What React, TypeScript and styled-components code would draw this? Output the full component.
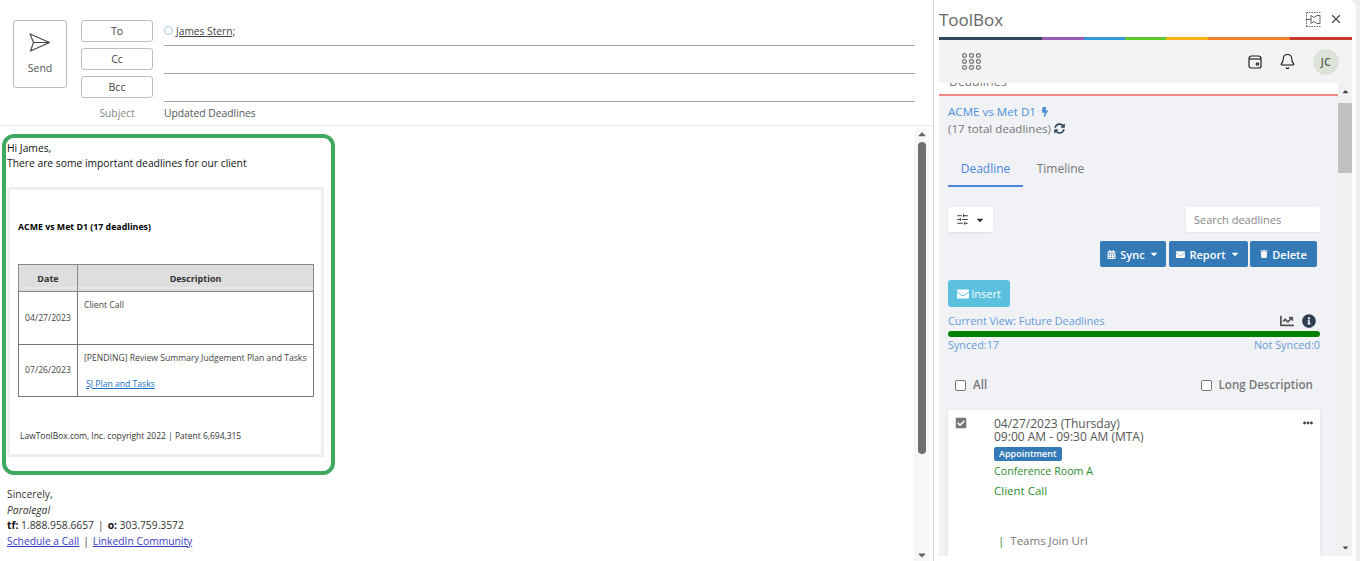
import styled, { createGlobalStyle } from 'styled-components';
import { Bell, SlidersHorizontal, X } from 'lucide-react';
import {
  FaBolt,
  FaCalendarAlt,
  FaCaretDown,
  FaCaretUp,
  FaChartLine,
  FaCheckSquare,
  FaEllipsisH,
  FaEnvelope,
  FaInfoCircle,
  FaSyncAlt,
  FaTrash,
} from 'react-icons/fa';

const GlobalStyle = createGlobalStyle`
  html, body {
    margin: 0;
    height: 561px;
    overflow: hidden;
    background: #fff;
  }
  * { box-sizing: border-box; }
`;

const segoe = `'Open Sans', 'Noto Sans', sans-serif`;

const rainbow = [
  { width: 103, color: '#34495e' },
  { width: 42, color: '#9b59b6' },
  { width: 41, color: '#3498db' },
  { width: 41, color: '#5ec72f' },
  { width: 42, color: '#f5b70f' },
  { width: 82, color: '#ee7f24' },
  { width: 62, color: '#c8392b' },
];

const App = () => {
  return (
    <Page>
      <GlobalStyle />
      <Compose>
        <Header>
          <SendButton>
            <svg width="22" height="20" viewBox="0 0 22 20" fill="none" stroke="#444" strokeWidth="1.1" strokeLinejoin="round">
              <path d="M1 1 L20.5 9.5 L1.5 18 L4.5 9.5 Z M4.5 9.5 H20.5" />
            </svg>
            <span>Send</span>
          </SendButton>
          <Recipients>
            <RecipientRow>
              <RecipientButton>To</RecipientButton>
              <RecipientLine>
                <Presence />
                <RecipientName>James Stern;</RecipientName>
              </RecipientLine>
            </RecipientRow>
            <RecipientRow>
              <RecipientButton>Cc</RecipientButton>
              <RecipientLine />
            </RecipientRow>
            <RecipientRow>
              <RecipientButton>Bcc</RecipientButton>
              <RecipientLine />
            </RecipientRow>
            <SubjectRow>
              <SubjectLabel>Subject</SubjectLabel>
              <SubjectText>Updated Deadlines</SubjectText>
            </SubjectRow>
          </Recipients>
        </Header>
        <BodyArea>
          <MailBody>
            <Highlight>
              <Greeting>
                Hi James,
                <br />
                There are some important deadlines for our client
              </Greeting>
              <ReportCard>
                <ReportTitle>ACME vs Met D1 (17 deadlines)</ReportTitle>
                <ReportTable>
                  <thead>
                    <tr>
                      <HeadCell $width={59}>Date</HeadCell>
                      <HeadCell>Description</HeadCell>
                    </tr>
                  </thead>
                  <tbody>
                    <tr>
                      <DateCell $height={53}>04/27/2023</DateCell>
                      <DescCell>Client Call</DescCell>
                    </tr>
                    <tr>
                      <DateCell $height={52}>07/26/2023</DateCell>
                      <DescCell>
                        [PENDING] Review Summary Judgement Plan and Tasks
                        <TaskLink>SJ Plan and Tasks</TaskLink>
                      </DescCell>
                    </tr>
                  </tbody>
                </ReportTable>
                <ReportFooter>LawToolBox.com, Inc. copyright 2022 | Patent 6,694,315</ReportFooter>
              </ReportCard>
            </Highlight>
            <Signature>
              Sincerely,
              <br />
              <em>Paralegal</em>
              <br />
              <b>tf:</b> 1.888.958.6657<Separator>|</Separator><b>o:</b> 303.759.3572
              <br />
              <SignatureLink>Schedule a Call</SignatureLink>
              <Separator>|</Separator>
              <SignatureLink>LinkedIn Community</SignatureLink>
            </Signature>
          </MailBody>
          <MailScrollbar>
            <FaCaretUp size={12} color="#666" />
            <MailThumb />
            <FaCaretDown size={12} color="#666" />
          </MailScrollbar>
        </BodyArea>
      </Compose>

      <Sidebar>
        <TitleBar>
          <Title>ToolBox</Title>
          <TitleIcons>
            <svg width="15" height="15" viewBox="0 0 15 15" fill="none" stroke="#666" strokeWidth="1">
              <path d="M0.5 0.5H14.5M0.5 14.5H14.5M0.5 0.5V14.5" strokeDasharray="1.5 1" />
              <path d="M0 7.5H5M5 3.5L8 5.5L11 3.5H14V11.5H11L8 9.5L5 11.5Z" />
            </svg>
            <X size={14} color="#444" />
          </TitleIcons>
        </TitleBar>
        <RainbowBar>
          {rainbow.map((part) => (
            <RainbowPart key={part.color} $width={part.width} $color={part.color} />
          ))}
        </RainbowBar>
        <TopBar>
          <svg width="19" height="17" viewBox="0 0 19 17" fill="none" stroke="#777" strokeWidth="1.2">
            {[2.5, 8.5, 14.5].map((cy) =>
              [2.5, 9.5, 16.5].map((cx) => <ellipse key={`${cx}-${cy}`} cx={cx} cy={cy} rx="2" ry="1.8" />)
            )}
          </svg>
          <TopBarRight>
            <svg width="14" height="14" viewBox="0 0 14 14" fill="none" stroke="#222" strokeWidth="1.2">
              <path d="M1 3.5a2.5 2.5 0 0 1 2.5-2.5h7A2.5 2.5 0 0 1 13 3.5V11a2 2 0 0 1-2 2H3a2 2 0 0 1-2-2z" />
              <path d="M1 4h12" />
              <circle cx="9.5" cy="9" r="1.2" />
            </svg>
            <Bell size={17} color="#111" strokeWidth={1.5} />
            <Avatar>JC</Avatar>
          </TopBarRight>
        </TopBar>
        <Panel>
          <PanelContent>
            <SectionHead>
              <SectionHeadText>Deadlines</SectionHeadText>
            </SectionHead>
            <Matter>
              <MatterName>
                ACME vs Met D1 <FaBolt size={10} />
              </MatterName>
              <MatterCount>
                (17 total deadlines) <FaSyncAlt size={11} color="#34495e" />
              </MatterCount>
            </Matter>
            <Tabs>
              <Tab $active>Deadline</Tab>
              <Tab>Timeline</Tab>
            </Tabs>
            <FilterRow>
              <FilterButton>
                <SlidersHorizontal size={13} color="#333" strokeWidth={1.7} />
                <FaCaretDown size={10} color="#333" />
              </FilterButton>
              <SearchBox>Search deadlines</SearchBox>
            </FilterRow>
            <ActionRow>
              <ActionButton $width={66}>
                <FaCalendarAlt size={9} /> Sync <FaCaretDown size={10} />
              </ActionButton>
              <ActionButton $width={79}>
                <FaEnvelope size={9} /> Report <FaCaretDown size={10} />
              </ActionButton>
              <ActionButton $width={67}>
                <FaTrash size={8} /> Delete
              </ActionButton>
            </ActionRow>
            <InsertButton>
              <FaEnvelope size={12} /> Insert
            </InsertButton>
            <ViewRow>
              <span>Current View: Future Deadlines</span>
              <ViewIcons>
                <FaChartLine size={14} color="#555" />
                <FaInfoCircle size={14} color="#2c3e50" />
              </ViewIcons>
            </ViewRow>
            <SyncBar />
            <SyncRow>
              <span>Synced:17</span>
              <span>Not Synced:0</span>
            </SyncRow>
            <CheckRow>
              <CheckLabel>
                <CheckBox /> All
              </CheckLabel>
              <CheckLabel>
                <CheckBox /> Long Description
              </CheckLabel>
            </CheckRow>
            <DeadlineCard>
              <FaCheckSquare size={12} color="#777" />
              <DeadlineInfo>
                <DeadlineDate>
                  04/27/2023 (Thursday)
                  <br />
                  09:00 AM - 09:30 AM (MTA)
                </DeadlineDate>
                <Badge>Appointment</Badge>
                <Location>Conference Room A</Location>
                <DeadlineTitle>Client Call</DeadlineTitle>
                <JoinRow>
                  <JoinBar>|</JoinBar> Teams Join Url
                </JoinRow>
              </DeadlineInfo>
              <CardMenu>
                <FaEllipsisH size={10} color="#444" />
              </CardMenu>
            </DeadlineCard>
          </PanelContent>
          <PanelScrollbar>
            <FaCaretUp size={9} color="#444" />
            <PanelThumb />
            <FaCaretDown size={9} color="#444" />
          </PanelScrollbar>
        </Panel>
      </Sidebar>
    </Page>
  );
};

export default App;

const Page = styled.div`
  display: flex;
  width: 1360px;
  height: 561px;
  overflow: hidden;
  background: #ebedf1;
  font-family: ${segoe};
`;

const Compose = styled.div`
  width: 933px;
  height: 561px;
  background: #fff;
  display: flex;
  flex-direction: column;
`;

const Header = styled.div`
  height: 126px;
  display: flex;
  padding: 20px 18px 0 13px;
  gap: 14px;
  border-bottom: 1px solid #e6e6e6;
`;

const SendButton = styled.div`
  width: 54px;
  height: 68px;
  border: 1px solid #bdbdbd;
  border-radius: 3px;
  display: flex;
  flex-direction: column;
  align-items: center;
  padding-top: 12px;
  gap: 8px;
  font-size: 10.5px;
  color: #555;
`;

const Recipients = styled.div`
  flex: 1;
  display: flex;
  flex-direction: column;
  gap: 6px;
`;

const RecipientRow = styled.div`
  display: flex;
  height: 22px;
  gap: 11px;
`;

const RecipientButton = styled.div`
  width: 72px;
  height: 22px;
  border: 1px solid #bdbdbd;
  border-radius: 3px;
  display: flex;
  align-items: center;
  justify-content: center;
  font-size: 10.5px;
  color: #444;
`;

const RecipientLine = styled.div`
  flex: 1;
  height: 26px;
  border-bottom: 1px solid #a6a6a6;
  display: flex;
  align-items: center;
  padding-bottom: 4px;
  gap: 3px;
`;

const Presence = styled.span`
  width: 9px;
  height: 9px;
  border-radius: 50%;
  border: 1px solid #a5cfe0;
`;

const RecipientName = styled.span`
  font-size: 10.2px;
  color: #444;
  text-decoration: underline;
`;

const SubjectRow = styled.div`
  display: flex;
  gap: 11px;
  margin-top: 2px;
  font-size: 10.3px;
  line-height: 15px;
`;

const SubjectLabel = styled.span`
  width: 72px;
  text-align: center;
  color: #888;
`;

const SubjectText = styled.span`
  color: #555;
`;

const BodyArea = styled.div`
  flex: 1;
  display: flex;
  min-height: 0;
`;

const MailBody = styled.div`
  flex: 1;
  padding: 8px 0 0 2px;
`;

const Highlight = styled.div`
  width: 333px;
  height: 341px;
  border: 4px solid #3fa95f;
  border-radius: 12px;
  padding: 3px 0 0 1px;
`;

const Greeting = styled.div`
  font-size: 10.3px;
  line-height: 15px;
  color: #111;
`;

const ReportCard = styled.div`
  margin-top: 16px;
  width: 317px;
  height: 270px;
  border: 3px solid #efefef;
  padding: 30px 8px 0 8px;
`;

const ReportTitle = styled.div`
  font-size: 8.8px;
  font-weight: 700;
  line-height: 14px;
  color: #000;
`;

const ReportTable = styled.table`
  margin-top: 30px;
  width: 296px;
  border-collapse: collapse;
  table-layout: fixed;
  font-size: 8.65px;
  line-height: 11px;
  color: #444;
`;

const HeadCell = styled.th<{ $width?: number }>`
  width: ${(props) => (props.$width ? `${props.$width}px` : 'auto')};
  height: 27px;
  padding: 0;
  background: linear-gradient(#dedede 0 84%, #eee 84% 90%, #dedede 90%);
  border: 1px solid #888;
  font-size: 9px;
  font-weight: 700;
  color: #333;
`;

const DateCell = styled.td<{ $height: number }>`
  height: ${(props) => props.$height}px;
  border: 1px solid #777;
  text-align: center;
  padding: 0;
`;

const DescCell = styled.td`
  border: 1px solid #777;
  border-left-color: #aaa;
  vertical-align: top;
  padding: 8px 6px 0;
  white-space: nowrap;
`;

const TaskLink = styled.a`
  display: block;
  margin: 15px 0 0 2px;
  color: #1a6fc4;
  text-decoration: underline;
`;

const ReportFooter = styled.div`
  margin: 33px 0 0 2px;
  font-size: 8.47px;
  line-height: 12px;
  color: #333;
`;

const Signature = styled.div`
  margin: 12px 0 0 5px;
  font-size: 10.3px;
  line-height: 15.5px;
  color: #333;

  b {
    color: #111;
  }
`;

const Separator = styled.span`
  margin: 0 4px;
  color: #444;
`;

const SignatureLink = styled.a`
  color: #3a3ac4;
  text-decoration: underline;
`;

const MailScrollbar = styled.div`
  width: 15px;
  margin: 2px 4px 0 0;
  display: flex;
  flex-direction: column;
  align-items: center;
  background: #f7f7f7;
  border-radius: 5px 5px 0 0;
`;

const MailThumb = styled.div`
  width: 8px;
  height: 312px;
  margin: 2px 0 auto;
  border-radius: 4px;
  background: #6f6f6f;
`;

const Sidebar = styled.div`
  width: 423px;
  height: 561px;
  background: #fff;
  border-left: 1px solid #d8d8d8;
  border-top-right-radius: 8px;
  padding: 0 4px 5px 5px;
  display: flex;
  flex-direction: column;
`;

const TitleBar = styled.div`
  height: 37px;
  display: flex;
  align-items: center;
  justify-content: space-between;
  padding: 2px 9px 0 0;
`;

const Title = styled.div`
  font-size: 17px;
  color: #666;
`;

const TitleIcons = styled.div`
  display: flex;
  align-items: center;
  gap: 8px;
  margin-top: -1px;
`;

const RainbowBar = styled.div`
  height: 3px;
  display: flex;
`;

const RainbowPart = styled.div<{ $width: number; $color: string }>`
  width: ${(props) => props.$width}px;
  background: ${(props) => props.$color};
`;

const TopBar = styled.div`
  height: 43px;
  background: #f3f3f4;
  display: flex;
  align-items: center;
  justify-content: space-between;
  padding: 0 13px 0 23px;
`;

const TopBarRight = styled.div`
  display: flex;
  align-items: center;
  gap: 17px;
`;

const Avatar = styled.div`
  width: 26px;
  height: 26px;
  border-radius: 50%;
  background: #dde3d9;
  color: #4e5a4a;
  font-size: 10px;
  font-weight: 600;
  letter-spacing: 0.5px;
  display: flex;
  align-items: center;
  justify-content: center;
`;

const Panel = styled.div`
  flex: 1;
  display: flex;
  min-height: 0;
`;

const PanelContent = styled.div`
  width: 399px;
  background: #f0f2f6;
  overflow: hidden;
`;

const SectionHead = styled.div`
  height: 13px;
  background: #fff;
  border-bottom: 2px solid #f08a80;
  overflow: hidden;
  padding-left: 10px;
`;

const SectionHeadText = styled.div`
  font-size: 12.5px;
  line-height: 14px;
  color: #777;
  margin-top: -8px;
`;

const Matter = styled.div`
  padding: 7px 9px 0;
  font-size: 11.6px;
  line-height: 17px;
`;

const MatterName = styled.div`
  color: #4a90d9;

  svg {
    margin-left: 1px;
    vertical-align: -1px;
  }
`;

const MatterCount = styled.div`
  color: #777;

  svg {
    vertical-align: -1px;
  }
`;

const Tabs = styled.div`
  display: flex;
  margin: 21px 0 0 9px;
`;

const Tab = styled.div<{ $active?: boolean }>`
  width: 75px;
  height: 29px;
  text-align: center;
  font-size: 12px;
  line-height: 22px;
  color: ${(props) => (props.$active ? '#4a86e0' : '#777')};
  border-bottom: 2px solid ${(props) => (props.$active ? '#4a86e0' : 'transparent')};
`;

const FilterRow = styled.div`
  display: flex;
  justify-content: space-between;
  margin: 20px 18px 0 9px;
`;

const FilterButton = styled.div`
  width: 45px;
  height: 25px;
  background: #fff;
  border-radius: 2px;
  box-shadow: 0 1px 2px rgba(0, 0, 0, 0.08);
  display: flex;
  align-items: center;
  justify-content: center;
  gap: 6px;
`;

const SearchBox = styled.div`
  width: 134px;
  height: 25px;
  background: #fff;
  border-radius: 2px;
  box-shadow: 0 1px 2px rgba(0, 0, 0, 0.06);
  padding-left: 8px;
  font-size: 11px;
  line-height: 25px;
  color: #888;
`;

const ActionRow = styled.div`
  display: flex;
  justify-content: flex-end;
  gap: 2.5px;
  margin: 9px 21px 0 0;
`;

const ActionButton = styled.div<{ $width: number }>`
  width: ${(props) => props.$width}px;
  height: 26px;
  background: #337ab7;
  border-radius: 2px;
  color: #fff;
  font-size: 11px;
  font-weight: 600;
  display: flex;
  align-items: center;
  justify-content: center;
  gap: 4px;
`;

const InsertButton = styled.div`
  width: 62px;
  height: 27px;
  margin: 13px 0 0 9px;
  background: #5bc0de;
  border-radius: 3px;
  color: #fff;
  font-size: 11px;
  display: flex;
  align-items: center;
  justify-content: center;
  gap: 2px;
`;

const ViewRow = styled.div`
  display: flex;
  justify-content: space-between;
  align-items: center;
  margin: 6px 22px 0 9px;
  font-size: 10.8px;
  line-height: 16px;
  color: #6a9ad6;
`;

const ViewIcons = styled.div`
  display: flex;
  align-items: center;
  gap: 8px;
`;

const SyncBar = styled.div`
  height: 6px;
  margin: 2px 18px 0 9px;
  border-radius: 3px;
  background: #008000;
`;

const SyncRow = styled.div`
  display: flex;
  justify-content: space-between;
  margin: 0 18px 0 9px;
  font-size: 10.8px;
  line-height: 15px;
  color: #6a9ad6;
`;

const CheckRow = styled.div`
  display: flex;
  justify-content: space-between;
  margin: 25px 25px 0 16px;
`;

const CheckLabel = styled.div`
  display: flex;
  align-items: center;
  gap: 7px;
  font-size: 11.6px;
  font-weight: 600;
  line-height: 16px;
  color: #777;
`;

const CheckBox = styled.span`
  width: 11px;
  height: 11px;
  border: 1px solid #777;
  border-radius: 2px;
  background: #fff;
`;

const DeadlineCard = styled.div`
  margin: 17px 18px 0 9px;
  height: 200px;
  background: #fff;
  box-shadow: 0 1px 3px rgba(0, 0, 0, 0.1);
  display: flex;
  padding: 7px 7px 0 7px;
  gap: 27px;
`;

const DeadlineInfo = styled.div`
  flex: 1;
`;

const DeadlineDate = styled.div`
  font-size: 12px;
  line-height: 13px;
  color: #555;
`;

const Badge = styled.div`
  width: fit-content;
  margin-top: 4px;
  padding: 0 5px;
  background: #337ab7;
  border-radius: 2px;
  font-size: 9px;
  font-weight: 600;
  line-height: 14px;
  color: #fff;
`;

const Location = styled.div`
  margin-top: 3px;
  font-size: 10.7px;
  line-height: 15px;
  color: #2e8b2e;
`;

const DeadlineTitle = styled.div`
  margin-top: 4px;
  font-size: 11.5px;
  line-height: 15px;
  color: #2e8b2e;
`;

const JoinRow = styled.div`
  margin: 35px 0 0 4px;
  font-size: 11.5px;
  line-height: 15px;
  color: #777;
`;

const JoinBar = styled.span`
  color: #2e8b2e;
  margin-right: 3px;
`;

const CardMenu = styled.div`
  height: 10px;
  line-height: 10px;
`;

const PanelScrollbar = styled.div`
  width: 14px;
  height: 100%;
  background: #f1f1f1;
  display: flex;
  flex-direction: column;
  align-items: center;
  padding: 4px 0;
`;

const PanelThumb = styled.div`
  width: 14px;
  height: 70px;
  margin: 7px 0 auto;
  background: #c1c1c1;
`;
